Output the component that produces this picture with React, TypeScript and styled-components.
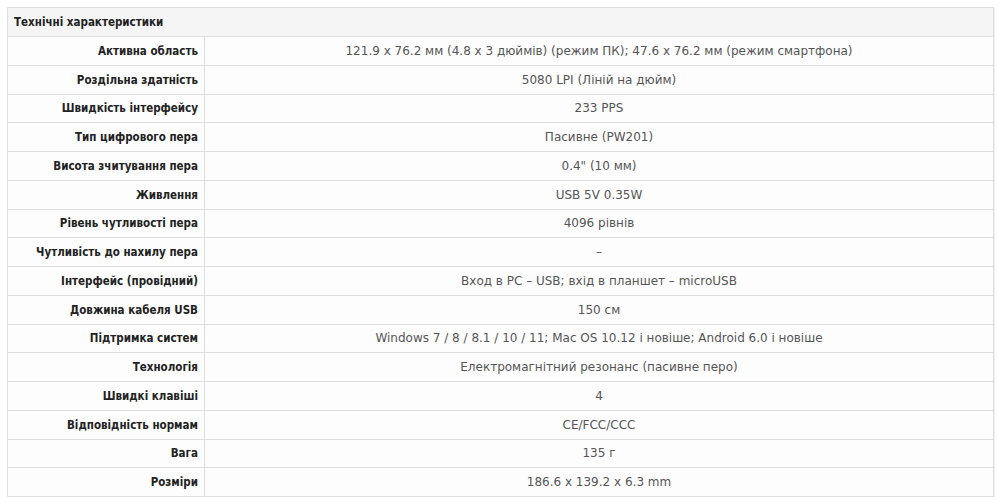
import React from "react";
import styled, { createGlobalStyle } from "styled-components";

const Global = createGlobalStyle`
  html, body { margin: 0; padding: 0; background: #fff; }
  body { font-family: "DejaVu Sans", "Liberation Sans", sans-serif; }
`;

const Wrap = styled.div`
  padding: 7px 6px 0 7px;
`;

const Table = styled.div`
  border: 1px solid #dedede;
  border-bottom: none;
  width: 987px;
  box-sizing: border-box;
  box-shadow: 1px 1px 0 #f0f0f0;
`;

const Head = styled.div`
  height: 29px;
  display: flex;
  align-items: center;
  padding-left: 6px;
  background: #f5f5f5;
  border-bottom: 1px solid #dedede;
  font-family: "DejaVu Sans Condensed", "DejaVu Sans", sans-serif;
  font-stretch: condensed;
  font-weight: bold;
  font-size: 11.5px;
  color: #222;
  box-sizing: border-box;
`;

const Row = styled.div`
  display: grid;
  grid-template-columns: 197px 1fr;
  height: 28.75px;
  border-bottom: 1px solid #dedede;
  box-sizing: border-box;
  background: #fdfdfd;
`;

const Label = styled.div`
  border-right: 1px solid #dedede;
  display: flex;
  align-items: center;
  justify-content: flex-end;
  padding-right: 6px;
  font-family: "DejaVu Sans Condensed", "DejaVu Sans", sans-serif;
  font-stretch: condensed;
  font-weight: bold;
  font-size: 11.5px;
  color: #222;
`;

const Value = styled.div`
  display: flex;
  align-items: center;
  justify-content: center;
  font-size: 12px;
  color: #555;
`;

const rows: [string, string][] = [
  ["Активна область", "121.9 x 76.2 мм (4.8 x 3 дюймів) (режим ПК); 47.6 x 76.2 мм (режим смартфона)"],
  ["Роздільна здатність", "5080 LPI (Ліній на дюйм)"],
  ["Швидкість інтерфейсу", "233 PPS"],
  ["Тип цифрового пера", "Пасивне (PW201)"],
  ["Висота зчитування пера", "0.4\" (10 мм)"],
  ["Живлення", "USB 5V 0.35W"],
  ["Рівень чутливості пера", "4096 рівнів"],
  ["Чутливість до нахилу пера", "–"],
  ["Інтерфейс (провідний)", "Вход в PC – USB; вхід в планшет – microUSB"],
  ["Довжина кабеля USB", "150 см"],
  ["Підтримка систем", "Windows 7 / 8 / 8.1 / 10 / 11; Mac OS 10.12 і новіше; Android 6.0 і новіше"],
  ["Технологія", "Електромагнітний резонанс (пасивне перо)"],
  ["Швидкі клавіші", "4"],
  ["Відповідність нормам", "CE/FCC/CCC"],
  ["Вага", "135 г"],
  ["Розміри", "186.6 x 139.2 x 6.3 mm"],
];

export default function App() {
  return (
    <Wrap>
      <Global />
      <Table>
        <Head>Технічні характеристики</Head>
        {rows.map(([l, v]) => (
          <Row key={l}>
            <Label>{l}</Label>
            <Value>{v}</Value>
          </Row>
        ))}
      </Table>
    </Wrap>
  );
}
